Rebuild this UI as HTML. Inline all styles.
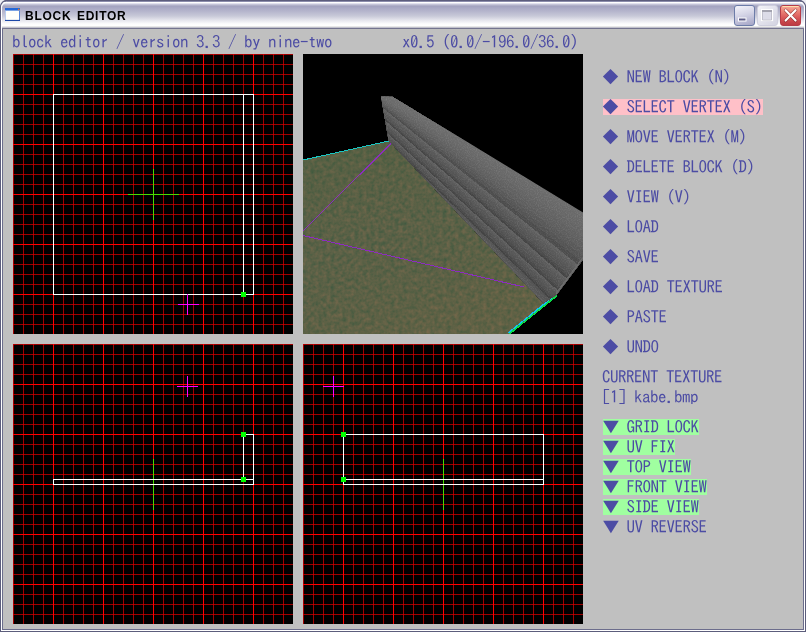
<!DOCTYPE html>
<html lang="en"><head><meta charset="utf-8"><title>BLOCK EDITOR</title>
<style>
html,body{margin:0;padding:0;}
body{width:806px;height:632px;overflow:hidden;background:#eeeef4;position:relative;font-family:"IPAGothic","IPA Gothic","IPAゴシック","Liberation Mono",monospace;}
#win{position:absolute;left:0;top:0;width:806px;height:632px;box-sizing:border-box;background:#eeeef4;overflow:hidden;}
#tb{position:absolute;left:0;top:0;width:806px;height:29px;border-radius:7px 7px 0 0;
background:linear-gradient(to bottom,#5c5d7c 0px,#5c5d7c 1px,#8c8dac 1px,#8c8dac 2px,#ffffff 2px,#ffffff 3px,#e2e2ee 3.5px,#c4c4d8 4.5px,#b0b0c8 5.5px,#a4a4c0 6.5px,#b4b4cc 11px,#c8c9d8 16px,#e4e4ec 20px,#fafafc 23.5px,#ffffff 25px,#ffffff 26px,#e8e8e8 26px,#e8e8e8 27px,#c0c0cc 27px,#c0c0cc 28px,#74748f 28px,#74748f 29px);}
#cl{position:absolute;left:3px;top:29px;width:800px;height:600px;background:#c0c0c0;}
.bl{position:absolute;top:0;width:1px;height:632px;}
.bh{position:absolute;left:0;height:1px;width:806px;}
#ttl{position:absolute;left:25px;top:8px;font:bold 12px/16px "Liberation Sans",sans-serif;color:#000;letter-spacing:0.75px;word-spacing:1.4px;will-change:transform;white-space:nowrap;}
.pn{position:absolute;display:block;}
.t{position:absolute;font-size:17px;letter-spacing:-0.5px;line-height:16px;height:16px;color:#4c4ca4;white-space:pre;text-indent:-1px;will-change:transform;}
.tr{display:inline-block;text-indent:0;transform:translate(0.5px,0.5px) scale(1.14,0.96);}
.sel{background:#ffc0c8;}
.on{background:#a0ffa0;}
.btn{position:absolute;top:5px;width:21px;height:21px;box-sizing:border-box;border-radius:3px;}
</style></head><body>
<div id="win">
<svg width="0" height="0" style="position:absolute"><defs><pattern id="ix" width="10" height="10" patternUnits="userSpaceOnUse"><rect width="1" height="1" fill="#cc0000"/></pattern></defs></svg>
<div id="tb"></div>
<div id="cl"></div>
<div class="bl" style="left:0;background:#5c5d7c;top:6px"></div><div class="bl" style="left:1px;background:#fff;top:4px"></div><div class="bl" style="left:2px;background:#6c6d8c;top:29px"></div>
<div class="bl" style="left:803px;background:#6c6d8c;top:29px"></div><div class="bl" style="left:804px;background:#fff;top:4px"></div><div class="bl" style="left:805px;background:#5c5d7c;top:6px"></div>
<div class="bh" style="top:629px;background:#6c6d8c;left:2px;width:802px"></div><div class="bh" style="top:630px;background:#fff;left:1px;width:804px"></div><div class="bh" style="top:631px;background:#5c5d7c"></div>
<svg class="pn" style="left:5px;top:8px" width="16" height="14" viewBox="0 0 16 14"><rect x="0" y="0" width="15" height="13" fill="#fffffa"/><rect x="0" y="0" width="15" height="2.6" fill="#2468d8"/><rect x="0" y="2.6" width="0.8" height="10.4" fill="#a8c0ea"/><rect x="14" y="2.6" width="1" height="10.4" fill="#5584d6"/><rect x="0" y="11.9" width="15" height="1.1" fill="#1c48a8"/><rect x="13" y="0.8" width="1.4" height="1.4" fill="#f07020"/></svg>
<svg class="pn" style="left:0;top:0" width="806" height="10" viewBox="0 0 806 10"><path d="M0.5 10V7A6.5 6.5 0 0 1 7 0.5" stroke="#5c5d7c" stroke-width="1.2" fill="none"/><path d="M1.5 10V7.5A5.5 5.5 0 0 1 7 2.3" stroke="#fff" stroke-width="1.1" fill="none"/><path d="M805.5 10V7A6.5 6.5 0 0 0 799 0.5" stroke="#5c5d7c" stroke-width="1.2" fill="none"/><path d="M804.5 10V7.5A5.5 5.5 0 0 0 799 2.3" stroke="#fff" stroke-width="1.1" fill="none"/></svg>
<div id="ttl">BLOCK EDITOR</div>
<div class="btn" style="left:734px;border:1px solid #6c7ca8;background:linear-gradient(165deg,#f4f4fa 0%,#d4d4e6 45%,#a4a4c6 100%);"></div>
<svg class="pn" style="left:737px;top:16px" width="11" height="7" viewBox="0 0 11 7"><rect x="1" y="1.5" width="8.5" height="4" fill="#fff"/><rect x="2" y="2.5" width="6.5" height="2" fill="#5c5c88"/></svg>
<div class="btn" style="left:757px;border:1px solid #cfcfde;background:linear-gradient(135deg,#f4f4f8 0%,#e2e2ec 50%,#d4d4e2 100%);"></div>
<svg class="pn" style="left:760px;top:8px" width="15" height="15" viewBox="0 0 15 15"><rect x="1.5" y="1.5" width="11" height="11" fill="#dcdce8" stroke="#fff" stroke-width="1.2"/><rect x="2" y="2" width="10" height="2" fill="#a4a4b0"/><path d="M2.5 4V12H11.5V4" stroke="#b8b8c4" stroke-width="0.8" fill="none"/></svg>
<div class="btn" style="left:780px;border:1px solid #b63c48;background:linear-gradient(to bottom,#ffe4b0 0,#ffd8a8 1px,#f4a090 1.5px,#ec8478 5px,#dc5c5c 11px,#c8444a 16px,#bc3c44 19px);"></div>
<svg class="pn" style="left:780px;top:5px" width="21" height="21" viewBox="0 0 21 21"><path d="M5.6 5.2L15.6 15.6M15.6 5.2L5.6 15.6" stroke="#6a1c1c" stroke-opacity="0.55" stroke-width="3.4" stroke-linecap="round"/><path d="M5.6 5.2L15.6 15.6M15.6 5.2L5.6 15.6" stroke="#fff" stroke-width="2.1" stroke-linecap="round"/></svg>

<div class="t" style="left:13px;top:34px">block editor / version 3.3 / by nine-two</div>
<div class="t" style="left:403px;top:34px">x0.5 (0.0/-196.0/36.0)</div>
<svg class="pn" style="left:13px;top:54px" width="280" height="280" viewBox="0 0 280 280" shape-rendering="crispEdges">
<rect width="280" height="280" fill="#000"/>
<path d="M0.5 0V280M10.5 0V280M20.5 0V280M30.5 0V280M50.5 0V280M60.5 0V280M70.5 0V280M80.5 0V280M100.5 0V280M110.5 0V280M120.5 0V280M130.5 0V280M150.5 0V280M160.5 0V280M170.5 0V280M180.5 0V280M200.5 0V280M210.5 0V280M220.5 0V280M230.5 0V280M250.5 0V280M260.5 0V280M270.5 0V280M0 0.5H280M0 10.5H280M0 20.5H280M0 30.5H280M0 50.5H280M0 60.5H280M0 70.5H280M0 80.5H280M0 100.5H280M0 110.5H280M0 120.5H280M0 130.5H280M0 150.5H280M0 160.5H280M0 170.5H280M0 180.5H280M0 200.5H280M0 210.5H280M0 220.5H280M0 230.5H280M0 250.5H280M0 260.5H280M0 270.5H280" stroke="#a00000" fill="none"/>
<rect width="280" height="280" fill="url(#ix)"/>
<path d="M40.5 0V280M90.5 0V280M140.5 0V280M190.5 0V280M240.5 0V280M0 40.5H280M0 90.5H280M0 140.5H280M0 190.5H280M0 240.5H280" stroke="#ff0000" fill="none"/>
<path d="M115 140.5H166M140.5 115V166" stroke="#48dc00" fill="none"/><path d="M40.5 40.5H240.5V240.5H40.5ZM230.5 40.5V240.5" stroke="#fff" fill="none"/><path d="M165 250.5H186M174.5 240V261" stroke="#f0f" fill="none"/><rect x="228" y="238" width="5" height="5" fill="#0f0"/>
</svg>
<svg class="pn" style="left:303px;top:54px" width="280" height="280" viewBox="0 0 280 280" shape-rendering="crispEdges">
<defs>
<filter id="nz" color-interpolation-filters="sRGB" x="0" y="0" width="100%" height="100%"><feTurbulence type="fractalNoise" baseFrequency="0.25" numOctaves="3" seed="4" result="t"/><feColorMatrix type="matrix" values="0.26 0 0 0 0.225  0.07 0 0 0 0.345  0.06 0 0 0 0.245  0 0 0 0 1"/><feComposite operator="in" in2="SourceGraphic"/></filter>
<filter id="nz2" color-interpolation-filters="sRGB" x="0" y="0" width="100%" height="100%"><feTurbulence type="fractalNoise" baseFrequency="0.9" numOctaves="1" seed="9"/><feColorMatrix type="matrix" values="0 0 0 0 1  0 0 0 0 1  0 0 0 0 1  0.9 0 0 0 -0.38"/><feComposite operator="in" in2="SourceGraphic"/></filter>
<linearGradient id="fl" x1="0" y1="90" x2="60" y2="280" gradientUnits="userSpaceOnUse"><stop offset="0" stop-color="#626a46"/><stop offset="1" stop-color="#70684a"/></linearGradient>
<linearGradient id="fl2" x1="40" y1="90" x2="110" y2="280" gradientUnits="userSpaceOnUse"><stop offset="0" stop-color="#3c5a32" stop-opacity="0.16"/><stop offset="0.5" stop-color="#5a5a3c" stop-opacity="0"/><stop offset="1" stop-color="#82643c" stop-opacity="0.12"/></linearGradient>
<clipPath id="wc"><polygon points="78,42.5 89.5,42.3 280,158.5 280,205.6 254,240 240.5,249 85.7,86.5"/></clipPath>
</defs>
<rect width="280" height="280" fill="#000"/>
<polygon id="flp" points="0,106 86,87 254,241 205.6,280 0,280" fill="url(#fl)"/>
<polygon points="0,106 86,87 254,241 205.6,280 0,280" fill="#fff" filter="url(#nz)"/>
<polygon points="0,106 86,87 254,241 205.6,280 0,280" fill="url(#fl2)"/>
<path d="M88,89.5L0,177M0,181.5L221,233" stroke="#8c2cc0" stroke-width="1" fill="none"/>
<path d="M0,106L86,87" stroke="#18c8c4" stroke-width="1" fill="none"/>
<path d="M253.3,240.2L204.8,279.2" stroke="#10c4f0" stroke-width="1.3" fill="none"/><path d="M254.2,241.4L205.8,280.4" stroke="#08e048" stroke-width="1.5" fill="none"/>
<g clip-path="url(#wc)">
<polygon points="89.3,42.3 300.0,169.4 300.0,319.7 83.9,89.4 70,42.4" fill="#6c6c6c"/>
<polygon points="85.5,42.4 300.0,171.4 300.0,319.7 83.9,89.4 70,42.4" fill="#6b6b6b"/>
<polygon points="81.8,42.4 300.0,173.4 300.0,319.7 83.9,89.4 70,42.4" fill="#6b6b6b"/>
<polygon points="78.0,42.5 300.0,175.5 300.0,319.7 83.9,89.4" fill="#696969"/>
<polygon points="78.3,44.0 300.0,182.4 300.0,319.7 83.9,89.4" fill="#676767"/>
<polygon points="78.5,45.4 300.0,189.3 300.0,319.7 83.9,89.4" fill="#646464"/>
<polygon points="78.8,46.9 300.0,196.2 300.0,319.7 83.9,89.4" fill="#616161"/>
<polygon points="79.1,48.4 300.0,203.2 300.0,319.7 83.9,89.4" fill="#5e5e5e"/>
<polygon points="79.3,49.9 300.0,210.1 300.0,319.7 83.9,89.4" fill="#595959"/>
<polygon points="79.6,51.3 300.0,217.0 300.0,319.7 83.9,89.4" fill="#545454"/>
<polygon points="79.9,52.8 300.0,223.9 300.0,319.7 83.9,89.4" fill="#4c4c4c"/>
<polygon points="80.1,54.3 300.0,230.8 300.0,319.7 83.9,89.4" fill="#616161"/>
<polygon points="80.4,55.8 300.0,234.0 300.0,319.7 83.9,89.4" fill="#5d5d5d"/>
<polygon points="80.7,57.4 300.0,237.1 300.0,319.7 83.9,89.4" fill="#595959"/>
<polygon points="81.0,59.0 300.0,240.3 300.0,319.7 83.9,89.4" fill="#575757"/>
<polygon points="81.2,60.5 300.0,243.4 300.0,319.7 83.9,89.4" fill="#545454"/>
<polygon points="81.5,62.1 300.0,246.5 300.0,319.7 83.9,89.4" fill="#525252"/>
<polygon points="81.8,63.6 300.0,249.7 300.0,319.7 83.9,89.4" fill="#4b4b4b"/>
<polygon points="82.1,65.2 300.0,252.8 300.0,319.7 83.9,89.4" fill="#444444"/>
<polygon points="82.4,66.7 300.0,256.0 300.0,319.7 83.9,89.4" fill="#5f5f5f"/>
<polygon points="82.6,68.3 300.0,258.8 300.0,319.7 83.9,89.4" fill="#5b5b5b"/>
<polygon points="82.9,69.9 300.0,261.6 300.0,319.7 83.9,89.4" fill="#575757"/>
<polygon points="83.2,71.4 300.0,264.3 300.0,319.7 83.9,89.4" fill="#555555"/>
<polygon points="83.5,73.0 300.0,267.1 300.0,319.7 83.9,89.4" fill="#525252"/>
<polygon points="83.8,74.5 300.0,269.9 300.0,319.7 83.9,89.4" fill="#505050"/>
<polygon points="84.0,76.1 300.0,272.7 300.0,319.7 83.9,89.4" fill="#4a4a4a"/>
<polygon points="84.3,77.6 300.0,275.5 300.0,319.7 83.9,89.4" fill="#444444"/>
<polygon points="84.6,79.2 300.0,278.3 300.0,319.7 83.9,89.4" fill="#5d5d5d"/>
<polygon points="84.8,80.5 300.0,280.5 300.0,319.7 83.9,89.4" fill="#595959"/>
<polygon points="85.0,81.7 300.0,282.8 300.0,319.7 83.9,89.4" fill="#555555"/>
<polygon points="85.3,83.0 300.0,285.0 300.0,319.7 83.9,89.4" fill="#535353"/>
<polygon points="85.5,84.3 300.0,287.3 300.0,319.7 83.9,89.4" fill="#515151"/>
<polygon points="85.7,85.5 300.0,289.5 300.0,319.7 83.9,89.4" fill="#4e4e4e"/>
<polygon points="86.0,86.8 300.0,291.8 300.0,319.7 83.9,89.4" fill="#484848"/>
<polygon points="86.2,88.1 300.0,294.0 300.0,319.7 83.9,89.4" fill="#424242"/>
<polygon points="86.4,89.4 300.0,296.3 300.0,319.7 83.9,89.4" fill="#515151"/>
<polygon points="86.3,89.0 300.0,298.8 300.0,319.7 83.9,89.4" fill="#535353"/>
<polygon points="86.3,88.6 300.0,301.4 300.0,319.7 83.9,89.4" fill="#555555"/>
<polygon points="86.2,88.2 300.0,304.0 300.0,319.7 83.9,89.4" fill="#565656"/>
<polygon points="86.1,87.9 300.0,306.5 300.0,319.7 83.9,89.4" fill="#585858"/>
<polygon points="86.1,87.5 300.0,309.1 300.0,319.7 83.9,89.4" fill="#5a5a5a"/>
<polygon points="86.0,87.1 300.0,311.6 300.0,319.7 83.9,89.4" fill="#5b5b5b"/>
<polygon points="85.9,86.7 300.0,314.2 300.0,319.7 83.9,89.4" fill="#5c5c5c"/>
<polygon points="281,202.6 278,205 252.5,239 255,241" fill="#686868"/>
<polygon points="78,42.5 89.5,42.3 280,158.5 280,205.6 254,240 240.5,249 85.7,86.5" fill="#fff" filter="url(#nz2)" opacity="0.3"/>
</g>
</svg>
<svg class="pn" style="left:13px;top:344px" width="280" height="280" viewBox="0 0 280 280" shape-rendering="crispEdges">
<rect width="280" height="280" fill="#000"/>
<path d="M0.5 0V280M10.5 0V280M20.5 0V280M30.5 0V280M50.5 0V280M60.5 0V280M70.5 0V280M80.5 0V280M100.5 0V280M110.5 0V280M120.5 0V280M130.5 0V280M150.5 0V280M160.5 0V280M170.5 0V280M180.5 0V280M200.5 0V280M210.5 0V280M220.5 0V280M230.5 0V280M250.5 0V280M260.5 0V280M270.5 0V280M0 0.5H280M0 10.5H280M0 20.5H280M0 30.5H280M0 50.5H280M0 60.5H280M0 70.5H280M0 80.5H280M0 100.5H280M0 110.5H280M0 120.5H280M0 130.5H280M0 150.5H280M0 160.5H280M0 170.5H280M0 180.5H280M0 200.5H280M0 210.5H280M0 220.5H280M0 230.5H280M0 250.5H280M0 260.5H280M0 270.5H280" stroke="#a00000" fill="none"/>
<rect width="280" height="280" fill="url(#ix)"/>
<path d="M40.5 0V280M90.5 0V280M140.5 0V280M190.5 0V280M240.5 0V280M0 40.5H280M0 90.5H280M0 140.5H280M0 190.5H280M0 240.5H280" stroke="#ff0000" fill="none"/>
<path d="M140.5 115V166" stroke="#48dc00" fill="none"/><path d="M230.5 90.5H240.5V140.5H40.5V135.5H240.5M230.5 90.5V135.5" stroke="#fff" fill="none"/><path d="M164 42.5H185M174.5 32V53" stroke="#f0f" fill="none"/><rect x="228" y="88" width="5" height="5" fill="#0f0"/><rect x="228" y="133" width="5" height="5" fill="#0f0"/>
</svg>
<svg class="pn" style="left:303px;top:344px" width="280" height="280" viewBox="0 0 280 280" shape-rendering="crispEdges">
<rect width="280" height="280" fill="#000"/>
<path d="M0.5 0V280M10.5 0V280M20.5 0V280M30.5 0V280M50.5 0V280M60.5 0V280M70.5 0V280M80.5 0V280M100.5 0V280M110.5 0V280M120.5 0V280M130.5 0V280M150.5 0V280M160.5 0V280M170.5 0V280M180.5 0V280M200.5 0V280M210.5 0V280M220.5 0V280M230.5 0V280M250.5 0V280M260.5 0V280M270.5 0V280M0 0.5H280M0 10.5H280M0 20.5H280M0 30.5H280M0 50.5H280M0 60.5H280M0 70.5H280M0 80.5H280M0 100.5H280M0 110.5H280M0 120.5H280M0 130.5H280M0 150.5H280M0 160.5H280M0 170.5H280M0 180.5H280M0 200.5H280M0 210.5H280M0 220.5H280M0 230.5H280M0 250.5H280M0 260.5H280M0 270.5H280" stroke="#a00000" fill="none"/>
<rect width="280" height="280" fill="url(#ix)"/>
<path d="M40.5 0V280M90.5 0V280M140.5 0V280M190.5 0V280M240.5 0V280M0 40.5H280M0 90.5H280M0 140.5H280M0 190.5H280M0 240.5H280" stroke="#ff0000" fill="none"/>
<path d="M140.5 115V166" stroke="#48dc00" fill="none"/><path d="M40.5 90.5H240.5V140.5H40.5ZM40.5 135.5H240.5" stroke="#fff" fill="none"/><path d="M20 42.5H41M30.5 32V53" stroke="#f0f" fill="none"/><rect x="38" y="88" width="5" height="5" fill="#0f0"/><rect x="38" y="133" width="5" height="5" fill="#0f0"/>
</svg>
<div class="t" style="left:603px;top:69px">◆ NEW BLOCK (N)</div>
<div class="t sel" style="left:603px;top:99px">◆ SELECT VERTEX (S)</div>
<div class="t" style="left:603px;top:129px">◆ MOVE VERTEX (M)</div>
<div class="t" style="left:603px;top:159px">◆ DELETE BLOCK (D)</div>
<div class="t" style="left:603px;top:189px">◆ VIEW (V)</div>
<div class="t" style="left:603px;top:219px">◆ LOAD</div>
<div class="t" style="left:603px;top:249px">◆ SAVE</div>
<div class="t" style="left:603px;top:279px">◆ LOAD TEXTURE</div>
<div class="t" style="left:603px;top:309px">◆ PASTE</div>
<div class="t" style="left:603px;top:339px">◆ UNDO</div>
<div class="t on" style="left:603px;top:419px"><span class="tr">▼</span> GRID LOCK</div>
<div class="t on" style="left:603px;top:439px"><span class="tr">▼</span> UV FIX</div>
<div class="t on" style="left:603px;top:459px"><span class="tr">▼</span> TOP VIEW</div>
<div class="t on" style="left:603px;top:479px"><span class="tr">▼</span> FRONT VIEW</div>
<div class="t on" style="left:603px;top:499px"><span class="tr">▼</span> SIDE VIEW</div>
<div class="t" style="left:603px;top:519px"><span class="tr">▼</span> UV REVERSE</div>
<div class="t" style="left:603px;top:369px">CURRENT TEXTURE</div>
<div class="t" style="left:603px;top:389px;height:14.6px;overflow:hidden">[1] kabe.bmp</div>
</div>
</body></html>
